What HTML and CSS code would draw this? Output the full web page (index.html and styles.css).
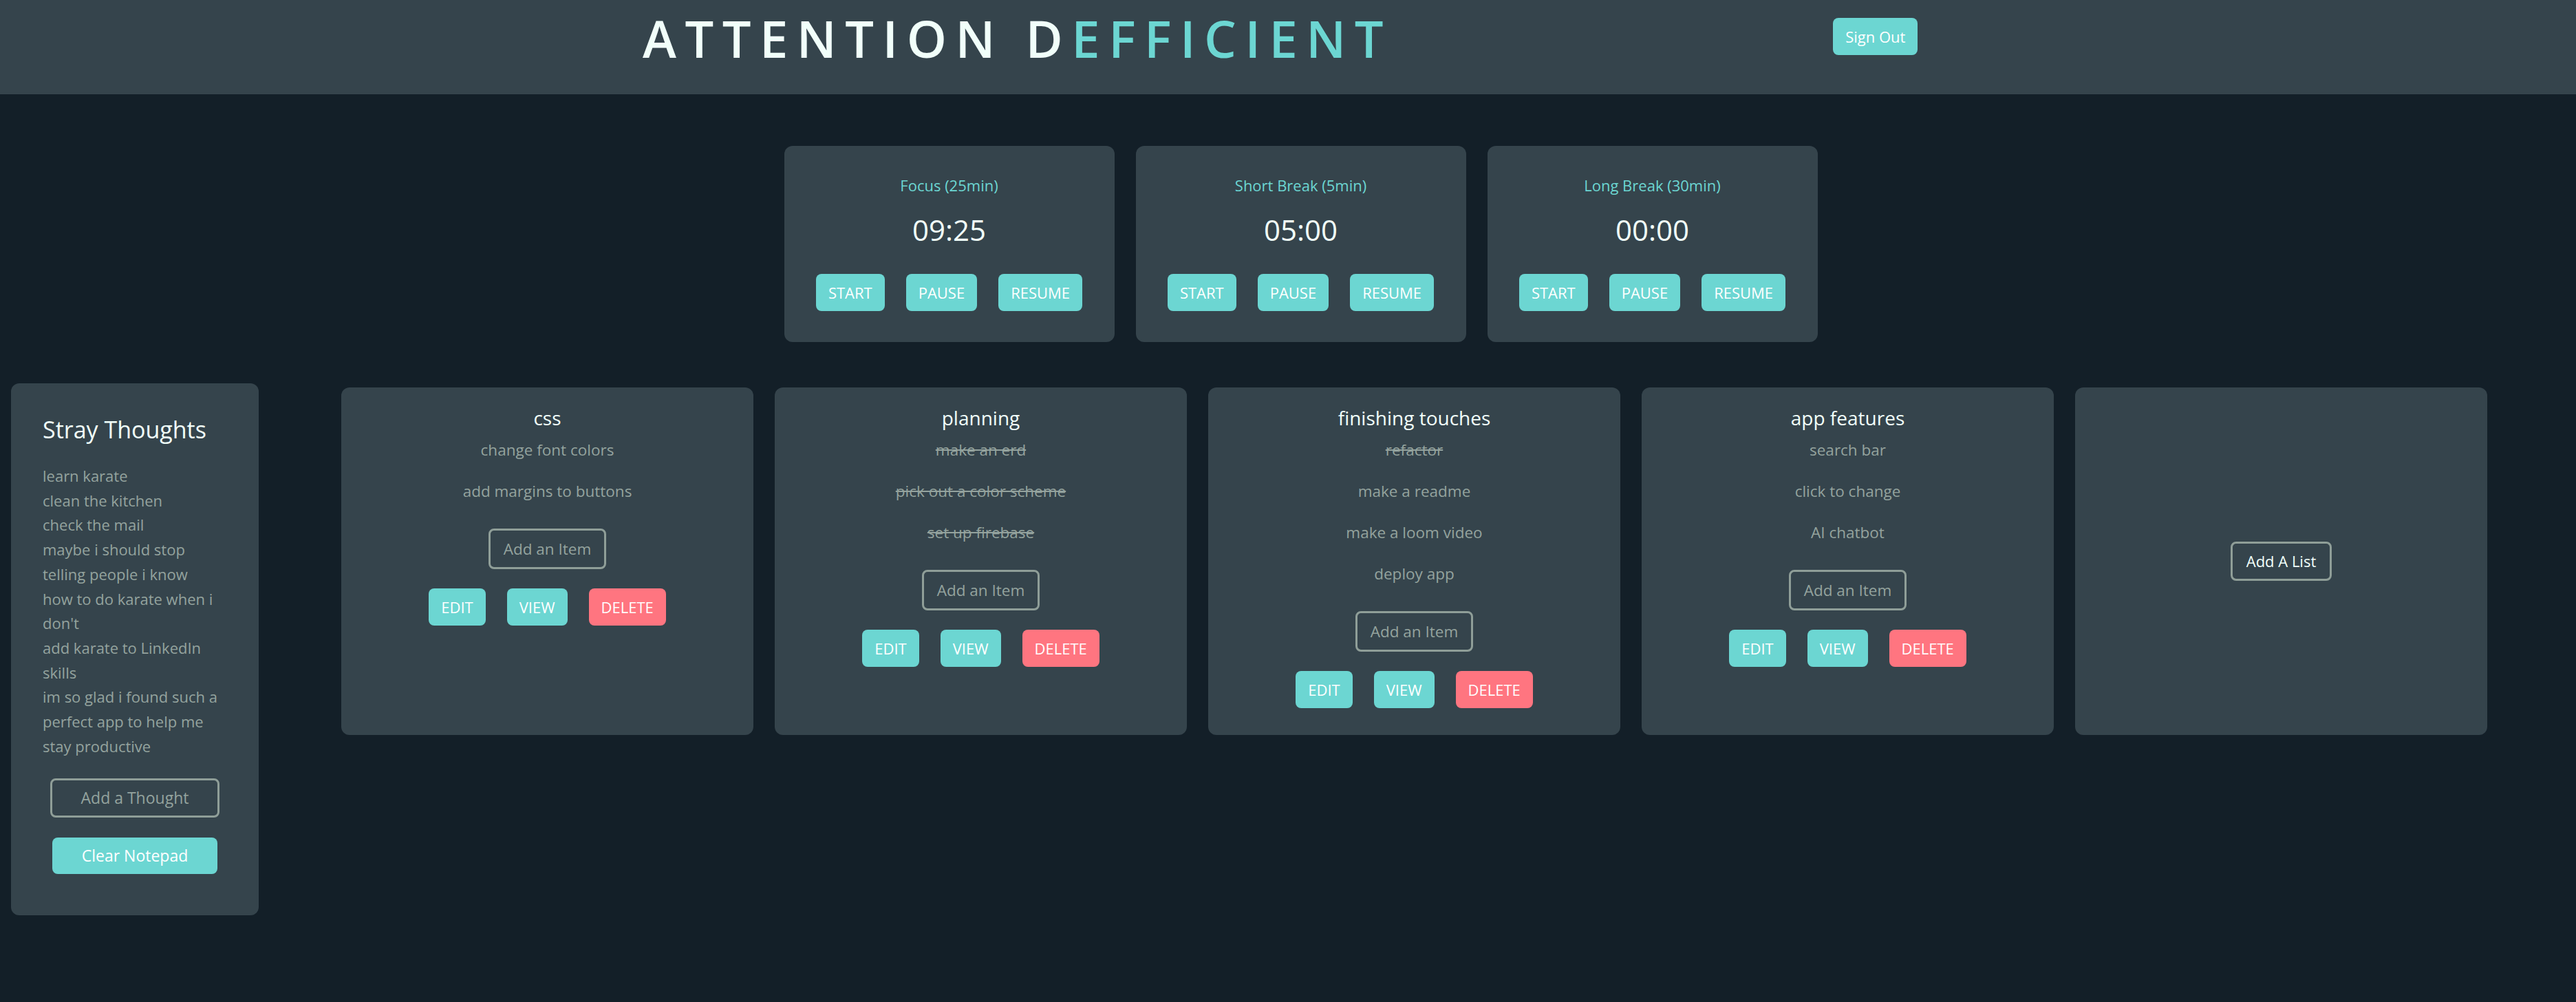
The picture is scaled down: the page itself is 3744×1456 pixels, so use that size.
FILE: index.html
```html
<!DOCTYPE html>
<html lang="en">
<head>
<meta charset="utf-8">
<title>Attention Defficient</title>
<link rel="stylesheet" href="styles.css">
</head>
<body>
<header class="topbar">
  <h1 class="brand">ATTENTION D<span class="brand-accent">EFFICIENT</span></h1>
  <button class="btn btn-teal btn-signout">Sign Out</button>
</header>

<main class="main">
  <section class="timers">
    <div class="timer-card">
      <div class="timer-label">Focus (25min)</div>
      <div class="timer-time">09:25</div>
      <div class="btn-row">
        <button class="btn btn-teal">START</button>
        <button class="btn btn-teal">PAUSE</button>
        <button class="btn btn-teal">RESUME</button>
      </div>
    </div>
    <div class="timer-card">
      <div class="timer-label">Short Break (5min)</div>
      <div class="timer-time">05:00</div>
      <div class="btn-row">
        <button class="btn btn-teal">START</button>
        <button class="btn btn-teal">PAUSE</button>
        <button class="btn btn-teal">RESUME</button>
      </div>
    </div>
    <div class="timer-card">
      <div class="timer-label">Long Break (30min)</div>
      <div class="timer-time">00:00</div>
      <div class="btn-row">
        <button class="btn btn-teal">START</button>
        <button class="btn btn-teal">PAUSE</button>
        <button class="btn btn-teal">RESUME</button>
      </div>
    </div>
  </section>

  <section class="workspace">
    <aside class="notepad">
      <h2 class="notepad-title">Stray Thoughts</h2>
      <ul class="thoughts">
        <li>learn karate</li>
        <li>clean the kitchen</li>
        <li>check the mail</li>
        <li>maybe i should stop telling people i know how to do karate when i don't</li>
        <li>add karate to LinkedIn skills</li>
        <li>im so glad i found such a perfect app to help me stay productive</li>
      </ul>
      <button class="btn btn-outline btn-thought">Add a Thought</button>
      <button class="btn btn-teal btn-clear">Clear Notepad</button>
    </aside>

    <div class="lists">
      <div class="list-card">
        <h3 class="list-title">css</h3>
        <ul class="items">
          <li>change font colors</li>
          <li>add margins to buttons</li>
        </ul>
        <button class="btn btn-outline btn-add-item">Add an Item</button>
        <div class="btn-row list-actions">
          <button class="btn btn-teal">EDIT</button>
          <button class="btn btn-teal">VIEW</button>
          <button class="btn btn-red">DELETE</button>
        </div>
      </div>

      <div class="list-card">
        <h3 class="list-title">planning</h3>
        <ul class="items">
          <li class="done">make an erd</li>
          <li class="done">pick out a color scheme</li>
          <li class="done">set up firebase</li>
        </ul>
        <button class="btn btn-outline btn-add-item">Add an Item</button>
        <div class="btn-row list-actions">
          <button class="btn btn-teal">EDIT</button>
          <button class="btn btn-teal">VIEW</button>
          <button class="btn btn-red">DELETE</button>
        </div>
      </div>

      <div class="list-card">
        <h3 class="list-title">finishing touches</h3>
        <ul class="items">
          <li class="done">refactor</li>
          <li>make a readme</li>
          <li>make a loom video</li>
          <li>deploy app</li>
        </ul>
        <button class="btn btn-outline btn-add-item">Add an Item</button>
        <div class="btn-row list-actions">
          <button class="btn btn-teal">EDIT</button>
          <button class="btn btn-teal">VIEW</button>
          <button class="btn btn-red">DELETE</button>
        </div>
      </div>

      <div class="list-card">
        <h3 class="list-title">app features</h3>
        <ul class="items">
          <li>search bar</li>
          <li>click to change</li>
          <li>AI chatbot</li>
        </ul>
        <button class="btn btn-outline btn-add-item">Add an Item</button>
        <div class="btn-row list-actions">
          <button class="btn btn-teal">EDIT</button>
          <button class="btn btn-teal">VIEW</button>
          <button class="btn btn-red">DELETE</button>
        </div>
      </div>

      <div class="list-card list-card-new">
        <button class="btn btn-outline btn-add-list">Add A List</button>
      </div>
    </div>
  </section>
</main>
</body>
</html>
```

FILE: styles.css
```css
* { box-sizing: border-box; }

html, body {
  margin: 0;
  padding: 0;
}

body {
  background: #131f28;
  font-family: "Open Sans", "Noto Sans", sans-serif;
  color: #f1fffa;
  min-height: 1456px;
}

/* ---------- header ---------- */
.topbar {
  height: 137px;
  background: #35444c;
  display: flex;
  align-items: flex-start;
  padding-left: 934px;
}

.brand {
  margin: 5px 0 0 0;
  font-size: 74px;
  font-weight: 600;
  letter-spacing: 12.5px;
  line-height: 101px;
  color: #f1fffa;
  white-space: nowrap;
}

.brand-accent { color: #6cd6d2; }

.btn-signout {
  margin-top: 26px;
  margin-left: 641px;
  font-size: 23.5px;
  padding: 11px 18px;
  line-height: 32px;
}

/* ---------- buttons ---------- */
.btn {
  font-family: "Open Sans", "Noto Sans", sans-serif;
  font-size: 22px;
  line-height: 30px;
  border: none;
  border-radius: 8px;
  padding: 12px 18px;
  color: #ffffff;
  cursor: pointer;
  white-space: nowrap;
}

.btn-teal { background: #6cd6d2; }
.btn-red { background: #ff7580; }

.btn-outline {
  background: transparent;
  border: 3px solid #8f9e98;
  color: #94a39e;
}

.btn-row {
  display: flex;
  justify-content: center;
  gap: 31px;
}

/* ---------- timers ---------- */
.timers {
  display: flex;
  justify-content: center;
  gap: 31px;
  padding-left: 37px;
  margin-top: 75px;
}

.timer-card {
  width: 480px;
  height: 285px;
  background: #35444c;
  border-radius: 12px;
  display: flex;
  flex-direction: column;
  align-items: center;
  padding-top: 42px;
}

.timer-label {
  font-size: 22px;
  line-height: 30px;
  color: #6cd6d2;
}

.timer-time {
  margin-top: 21px;
  font-size: 42px;
  line-height: 57px;
  color: #f1fffa;
}

.timer-card .btn-row { margin-top: 36px; }

/* ---------- workspace ---------- */
.workspace {
  display: flex;
  align-items: flex-start;
  margin-top: 60px;
  padding-left: 16px;
  gap: 120px;
}

.notepad {
  width: 360px;
  background: #35444c;
  border-radius: 12px;
  padding: 44px 0 60px 46px;
  display: flex;
  flex-direction: column;
}

.notepad-title {
  margin: 0;
  font-size: 34px;
  font-weight: 400;
  line-height: 46px;
  color: #f1fffa;
}

.thoughts {
  list-style: none;
  margin: 27px 0 0 0;
  padding: 0;
  width: 258px;
  font-size: 22px;
  line-height: 35.7px;
  color: #94a39e;
}

.btn-thought {
  align-self: flex-start;
  margin: 29px 0 0 11px;
  width: 246px;
  font-size: 23px;
  padding: 9px 0;
  line-height: 33px;
}

.btn-clear {
  align-self: flex-start;
  margin: 29px 0 0 14px;
  width: 240px;
  font-size: 23px;
  padding: 11px 0;
  line-height: 31px;
}

/* ---------- lists ---------- */
.lists {
  display: flex;
  gap: 31px;
  margin-top: 6px;
}

.list-card {
  width: 599px;
  height: 505px;
  background: #35444c;
  border-radius: 12px;
  display: flex;
  flex-direction: column;
  align-items: center;
  padding-top: 25px;
}

.list-title {
  margin: 0;
  font-size: 28px;
  font-weight: 400;
  line-height: 38px;
  color: #f1fffa;
}

.items {
  list-style: none;
  margin: 13px 0 0 0;
  padding: 0;
  display: flex;
  flex-direction: column;
  align-items: center;
  gap: 30px;
  font-size: 22.5px;
  line-height: 30px;
  color: #94a39e;
}

.items .done { text-decoration: line-through; }

.btn-add-item {
  margin-top: 39px;
  padding: 10px 19px;
  line-height: 33px;
  font-size: 22.5px;
}

.list-actions { margin-top: 28px; }

.list-card-new {
  justify-content: center;
  padding-top: 0;
}

.btn-add-list {
  color: #f1fffa;
  padding: 9px 20px;
  line-height: 33px;
}
```
